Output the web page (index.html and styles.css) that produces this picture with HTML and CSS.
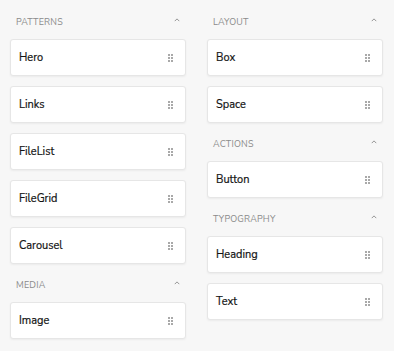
FILE: index.html
```html
<html>

<head>
    <meta name="viewport" content="width=device-width, initial-scale=1">
    <link rel="stylesheet" href="styles.css">
</head>

<body>
    <div class="panels">
        <div class="column">
            <div class="section">
                <div class="section-head">
                    <span>Patterns</span>
                    <svg class="chevron" viewBox="0 0 8 5"><path d="M1 4 L4 1 L7 4" /></svg>
                </div>
                <div class="items">
                    <div class="item"><span>Hero</span><span class="grip"><i></i><i></i><i></i><i></i><i></i><i></i></span></div>
                    <div class="item"><span>Links</span><span class="grip"><i></i><i></i><i></i><i></i><i></i><i></i></span></div>
                    <div class="item"><span>FileList</span><span class="grip"><i></i><i></i><i></i><i></i><i></i><i></i></span></div>
                    <div class="item"><span>FileGrid</span><span class="grip"><i></i><i></i><i></i><i></i><i></i><i></i></span></div>
                    <div class="item"><span>Carousel</span><span class="grip"><i></i><i></i><i></i><i></i><i></i><i></i></span></div>
                </div>
            </div>
            <div class="section">
                <div class="section-head">
                    <span>Media</span>
                    <svg class="chevron" viewBox="0 0 8 5"><path d="M1 4 L4 1 L7 4" /></svg>
                </div>
                <div class="items">
                    <div class="item"><span>Image</span><span class="grip"><i></i><i></i><i></i><i></i><i></i><i></i></span></div>
                </div>
            </div>
        </div>
        <div class="column">
            <div class="section">
                <div class="section-head">
                    <span>Layout</span>
                    <svg class="chevron" viewBox="0 0 8 5"><path d="M1 4 L4 1 L7 4" /></svg>
                </div>
                <div class="items">
                    <div class="item"><span>Box</span><span class="grip"><i></i><i></i><i></i><i></i><i></i><i></i></span></div>
                    <div class="item"><span>Space</span><span class="grip"><i></i><i></i><i></i><i></i><i></i><i></i></span></div>
                </div>
            </div>
            <div class="section">
                <div class="section-head">
                    <span>Actions</span>
                    <svg class="chevron" viewBox="0 0 8 5"><path d="M1 4 L4 1 L7 4" /></svg>
                </div>
                <div class="items">
                    <div class="item"><span>Button</span><span class="grip"><i></i><i></i><i></i><i></i><i></i><i></i></span></div>
                </div>
            </div>
            <div class="section">
                <div class="section-head">
                    <span>Typography</span>
                    <svg class="chevron" viewBox="0 0 8 5"><path d="M1 4 L4 1 L7 4" /></svg>
                </div>
                <div class="items">
                    <div class="item"><span>Heading</span><span class="grip"><i></i><i></i><i></i><i></i><i></i><i></i></span></div>
                    <div class="item"><span>Text</span><span class="grip"><i></i><i></i><i></i><i></i><i></i><i></i></span></div>
                </div>
            </div>
        </div>
    </div>
</body>

</html>
```

FILE: styles.css
```css
body {
    margin: 0;
    background-color: #f7f7f7;
    font-family: 'Nunito Sans', Lato, 'Open Sans', sans-serif;
}

.panels {
    display: grid;
    grid-template-columns: 176px 176px;
    column-gap: 21px;
    padding: 1px 11px 0 10px;
}

.section-head {
    height: 38px;
    display: flex;
    align-items: center;
    justify-content: space-between;
    padding: 3px 6px 0 6px;
    box-sizing: border-box;
    font-size: 9px;
    letter-spacing: 0.2px;
    text-transform: uppercase;
    color: #8a8a8a;
}

.chevron {
    width: 6px;
    height: 4px;
    margin-top: -3px;
    fill: none;
    stroke: #8a8a8a;
    stroke-width: 1.2;
}

.items {
    display: flex;
    flex-direction: column;
    gap: 10px;
}

.item {
    height: 37px;
    box-sizing: border-box;
    display: flex;
    align-items: center;
    justify-content: space-between;
    padding: 0 12px 0 8px;
    background-color: white;
    border: 1px solid #e6e6e6;
    border-radius: 3px;
    box-shadow: 0 1px 2px rgba(0, 0, 0, 0.05);
    font-size: 11px;
    color: #141414;
    -webkit-text-stroke: 0.2px #141414;
}

.grip {
    display: grid;
    grid-template-columns: 2px 2px;
    grid-auto-rows: 2px;
    gap: 1px;
}

.grip i {
    background-color: #8c8c8c;
    border-radius: 1px;
}
```
